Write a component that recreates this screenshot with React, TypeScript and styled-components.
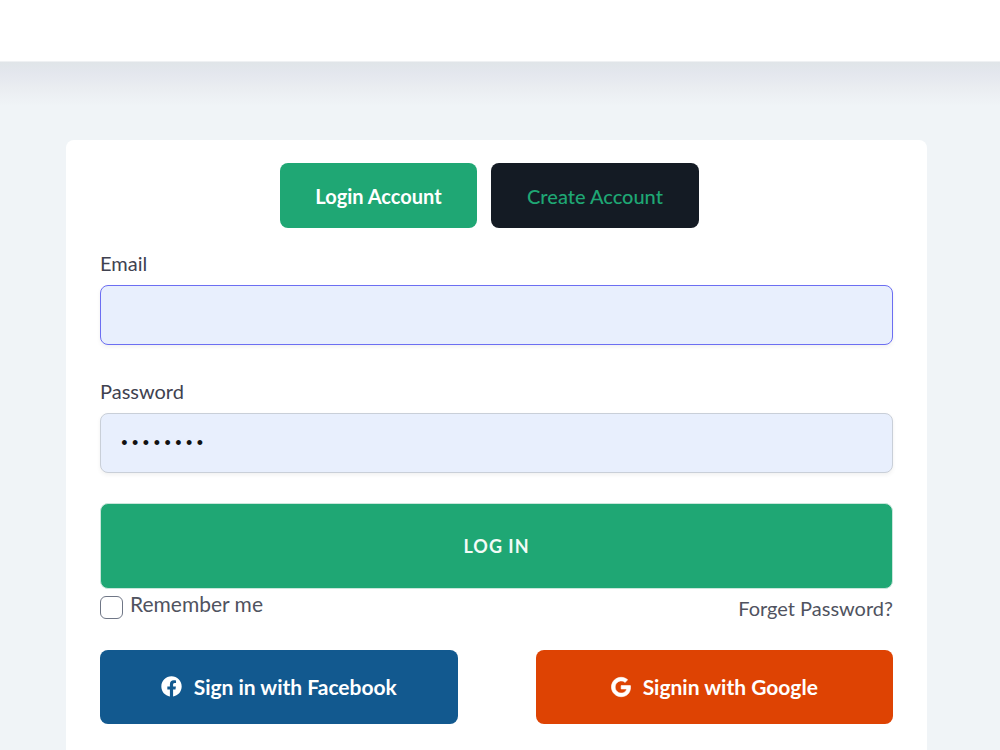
import React from "react";
import styled, { createGlobalStyle } from "styled-components";
import { FaFacebook, FaGoogle } from "react-icons/fa";

const GlobalStyle = createGlobalStyle`
  *, *::before, *::after { box-sizing: border-box; }
  body {
    margin: 0;
    background: #f0f4f7;
    color: #3f4250;
    font-family: Lato, "Open Sans", sans-serif;
    font-size: 20px;
    line-height: 24px;
  }
  button, input { font: inherit; }
`;

const Page = styled.div`
  display: flex;
  flex-direction: column;
  min-height: 100vh;
`;

const Header = styled.header`
  height: 62px;
  background: #fff;
  border-bottom: 1px solid #eff1f3;
`;

const Main = styled.main`
  flex: 1;
  display: flex;
  padding: 78px 73px 0 66px;
  background: linear-gradient(#e0e5e8, #e4e7ee 12px, #eaedf1 26px, #f0f4f7 44px);
`;

const Card = styled.section`
  flex: 1;
  min-width: 0;
  padding: 23px 34px 27px;
  background: #fff;
  border-radius: 8px 8px 0 0;
`;

const Tabs = styled.nav`
  display: flex;
  justify-content: center;
`;

const Tab = styled.button<{ $active?: boolean; $width: number }>`
  width: ${(p) => p.$width}px;
  height: 65px;
  margin-right: 14px;
  padding: 0;
  border: 0;
  border-radius: 8px;
  background: ${(p) => (p.$active ? "#1fa774" : "#141b24")};
  color: ${(p) => (p.$active ? "#fff" : "#1fa774")};
  font-weight: ${(p) => (p.$active ? 700 : 500)};
  cursor: pointer;
`;

const Form = styled.form`
  display: flex;
  flex-direction: column;
`;

const Field = styled.div`
  display: flex;
  flex-direction: column;
  gap: 10px;
  padding-top: 23px;

  & + & { padding-top: 34px; }
`;

const Label = styled.label`
  color: #3f4250;
`;

const Input = styled.input<{ $focused?: boolean }>`
  width: 100%;
  height: 60px;
  padding: 0 18px;
  border: 1px solid ${(p) => (p.$focused ? "#6c6ef2" : "#c9cfd8")};
  border-radius: 8px;
  outline: 0;
  background: #e8effd;
  color: #111;
  box-shadow: 0 2px 4px rgba(0, 0, 0, 0.06);

  &[type="password"] {
    padding-top: 2px;
    font-family: "Liberation Mono", monospace;
    font-size: 18px;
  }
`;

const Submit = styled.button`
  height: 86px;
  margin-top: 30px;
  padding: 0 0 1px;
  border: 1px solid #c9e6db;
  border-radius: 8px;
  background: #1fa774;
  color: #f2fbf7;
  font-size: 18px;
  font-weight: 700;
  letter-spacing: 1px;
  cursor: pointer;
`;

const Options = styled.div`
  display: flex;
  justify-content: space-between;
  align-items: flex-start;
  padding-top: 3px;
  color: #505360;
`;

const Remember = styled.label`
  display: flex;
  gap: 7px;
  font-size: 21px;
`;

const Checkbox = styled.input`
  appearance: none;
  width: 23px;
  height: 23px;
  margin: 4px 0 0;
  border: 1px solid #6f7686;
  border-radius: 6px;
  background: #fff;

  &:checked { background: #1fa774; }
`;

const Forgot = styled.a`
  padding-top: 4px;
  color: inherit;
  text-decoration: none;
`;

const Socials = styled.div`
  display: grid;
  grid-template-columns: 1fr 1fr;
  gap: 78px;
  padding-top: 30px;
`;

const Social = styled.button<{ $color: string }>`
  display: flex;
  align-items: center;
  justify-content: center;
  gap: 12px;
  height: 74px;
  padding: 0 0 1px;
  border: 0;
  border-radius: 8px;
  background: ${(p) => p.$color};
  color: #fff;
  font-size: 21px;
  font-weight: 700;
  cursor: pointer;
`;

const GoogleMark = styled(FaGoogle)`
  overflow: visible;
  stroke: currentColor;
  stroke-width: 16px;
`;

export default function App() {
  return (
    <>
      <GlobalStyle />
      <Page>
        <Header />
        <Main>
          <Card>
            <Tabs>
              <Tab type="button" $active $width={197}>Login Account</Tab>
              <Tab type="button" $width={208}>Create Account</Tab>
            </Tabs>
            <Form onSubmit={(e) => e.preventDefault()}>
              <Field>
                <Label htmlFor="email">Email</Label>
                <Input id="email" type="email" $focused />
              </Field>
              <Field>
                <Label htmlFor="password">Password</Label>
                <Input id="password" type="password" defaultValue="password" />
              </Field>
              <Submit type="submit">LOG IN</Submit>
              <Options>
                <Remember>
                  <Checkbox type="checkbox" />
                  Remember me
                </Remember>
                <Forgot href="#forgot">Forget Password?</Forgot>
              </Options>
              <Socials>
                <Social type="button" $color="#12598f">
                  <FaFacebook size={21} />
                  Sign in with Facebook
                </Social>
                <Social type="button" $color="#de4303">
                  <GoogleMark size={20} />
                  Signin with Google
                </Social>
              </Socials>
            </Form>
          </Card>
        </Main>
      </Page>
    </>
  );
}
